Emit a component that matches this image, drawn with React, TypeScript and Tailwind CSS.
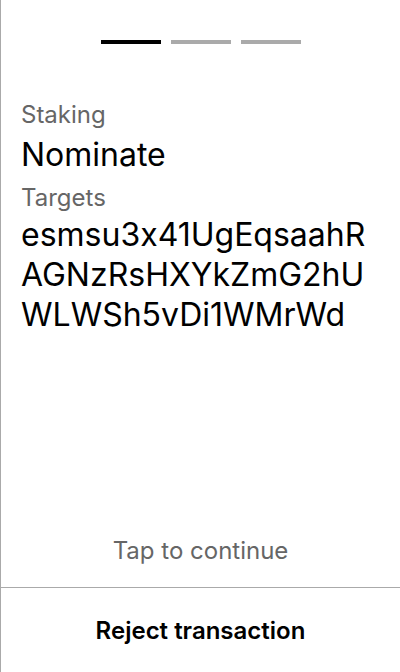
export default function App() {
  return (
    <div
      className="flex h-[672px] w-[400px] flex-col border-l border-[#aaaaaa] bg-white [font-feature-settings:'calt'_0]"
      style={{ fontFamily: 'Inter, "Noto Sans", sans-serif' }}
    >
      {/* step indicator */}
      <div className="flex justify-center gap-[10px] pt-10">
        <div className="h-1 w-[60px] bg-black" />
        <div className="h-1 w-[60px] bg-[#aaaaaa]" />
        <div className="h-1 w-[60px] bg-[#aaaaaa]" />
      </div>

      <div className="flex flex-col px-5 pt-[57px]">
        <span className="text-[24px] leading-[28px] text-[#666666]">Staking</span>
        <span className="mt-2 text-[32px] leading-[36px] text-black">Nominate</span>
        <span className="mt-[11px] text-[24px] leading-[28px] text-[#666666]">Targets</span>
        <span className="mt-[3px] break-all text-[32px] leading-[40px] text-black">
          esmsu3x41UgEqsaahRAGNzRsHXYkZmG2hUWLWSh5vDi1WMrWd
        </span>
      </div>

      <div className="flex-1" />

      <div className="pb-[22px] text-center text-[24px] leading-[28px] text-[#666666]">
        Tap to continue
      </div>
      <button className="h-[85px] border-t border-[#aaaaaa] pt-[2px] text-[24px] leading-[24px] font-semibold text-black">
        Reject transaction
      </button>
    </div>
  )
}
